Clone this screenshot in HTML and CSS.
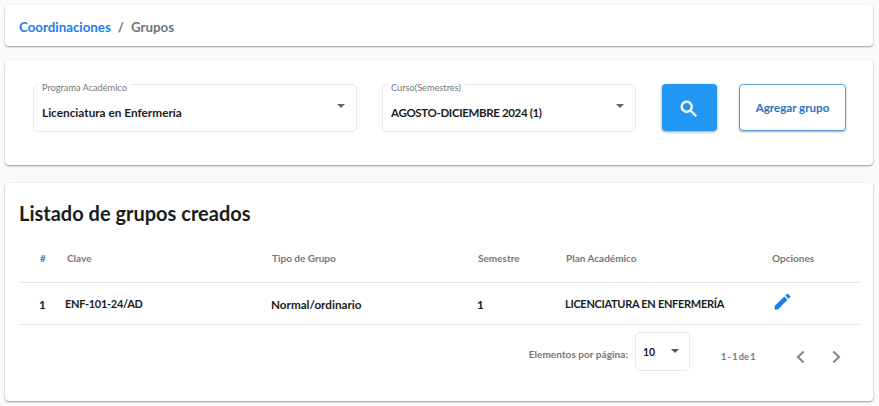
FILE: index.html
```html
<!DOCTYPE html>
<html lang="es">
<head>
<meta charset="utf-8">
<title>Grupos</title>
<link rel="stylesheet" href="styles.css">
</head>
<body>
<main class="page">
  <nav class="card crumbs"><a class="crumb-link">Coordinaciones</a><span class="crumb-sep">/</span><span class="crumb-current">Grupos</span></nav>
  <section class="card filters">
    <div class="select select-program">
      <span class="select-label">Programa Académico</span>
      <span class="select-value">Licenciatura en Enfermería</span>
      <span class="caret"></span>
    </div>
    <div class="select select-course">
      <span class="select-label">Curso(Semestres)</span>
      <span class="select-value select-value-upper">AGOSTO-DICIEMBRE 2024 (1)</span>
      <span class="caret"></span>
    </div>
    <button class="btn-search" aria-label="Buscar">
      <svg width="22" height="22" viewBox="0 0 24 24"><path fill="#fff" stroke="#fff" stroke-width=".6" d="M15.5 14h-.79l-.28-.27A6.47 6.47 0 0 0 16 9.5 6.5 6.5 0 1 0 9.5 16c1.61 0 3.09-.59 4.23-1.57l.27.28v.79l5 4.99L20.49 19l-4.99-5zm-6 0C7.01 14 5 11.99 5 9.5S7.01 5 9.5 5 14 7.01 14 9.5 11.99 14 9.5 14z"/></svg>
    </button>
    <button class="btn-add">Agregar grupo</button>
  </section>
  <section class="card list">
    <h1 class="list-title">Listado de grupos creados</h1>
    <div class="row row-head">
      <span class="c-num">#</span><span class="c-head">Clave</span><span class="c-head-tight">Tipo de Grupo</span><span class="c-head-tight">Semestre</span><span class="c-head-tight">Plan Académico</span><span class="c-head-tight">Opciones</span>
    </div>
    <div class="row row-body">
      <span class="c-num c-num-body">1</span><span class="c-upper">ENF-101-24/AD</span><span>Normal/ordinario</span><span>1</span><span class="c-upper">LICENCIATURA EN ENFERMERÍA</span>
      <span class="c-edit"><svg width="21" height="21" viewBox="0 0 24 24"><path fill="#1a7fe8" d="M3 17.25V21h3.75L17.81 9.94l-3.75-3.75L3 17.25zM20.71 7.04a1 1 0 0 0 0-1.41l-2.34-2.34a1 1 0 0 0-1.41 0l-1.83 1.83 3.75 3.75 1.83-1.83z"/></svg></span>
    </div>
    <div class="paginator">
      <span class="pg-label">Elementos por página:</span>
      <div class="pg-select"><span>10</span><span class="caret caret-pg"></span></div>
      <span class="pg-range">1 - 1 de 1</span>
      <svg class="pg-arrow" width="24" height="24" viewBox="0 0 24 24"><path fill="none" stroke="#8a8585" stroke-width="2" d="M14.6 6.5 9 12l5.6 5.5"/></svg>
      <svg class="pg-arrow" width="24" height="24" viewBox="0 0 24 24"><path fill="none" stroke="#8a8585" stroke-width="2" d="M9.4 6.5 15 12l-5.6 5.5"/></svg>
    </div>
  </section>
</main>
</body>
</html>
```
FILE: styles.css
```css
* { box-sizing: border-box; }
html, body { margin: 0; height: 100%; }
body {
  background: #fafafa;
  font-family: "Lato", "Noto Sans", sans-serif;
  color: #1c1c1c;
  overflow: hidden;
}
.page { display: flex; flex-direction: column; padding: 5px 6px 0 5px; }
.card {
  background: #fff;
  border-radius: 4px;
  box-shadow: 0 1px 2px rgba(0,0,0,.38), 0 0 2px rgba(0,0,0,.06);
}
.crumbs {
  height: 41px;
  display: flex;
  align-items: center;
  padding: 2px 14px 0;
  font-size: 13.3px;
  font-weight: 700;
}
.crumb-link { color: #1a7cf2; }
.crumb-sep { color: #6c757d; margin: 0 7px; }
.crumb-current { color: #6c757d; }
.filters {
  margin-top: 14px;
  height: 105px;
  display: flex;
  align-items: flex-start;
  padding: 24px 27px 0 28px;
}
.select {
  position: relative;
  height: 48px;
  border: 1px solid #e9e9e9;
  border-radius: 5px;
  display: flex;
  align-items: center;
  padding: 8px 8px 0;
}
.select-program { width: 324px; }
.select-course { width: 254px; margin-left: 25px; }
.select-label {
  position: absolute;
  left: 4px;
  top: -3px;
  background: #fff;
  padding: 0 4px;
  font-size: 9.2px;
  line-height: 12px;
  color: #777;
}
.select-value { font-size: 11.8px; font-weight: 700; white-space: nowrap; }
.select-value-upper { font-size: 11.5px; letter-spacing: -.35px; }
.caret {
  position: absolute;
  right: 11px;
  top: 19px;
  width: 0;
  height: 0;
  border-left: 4.5px solid transparent;
  border-right: 4.5px solid transparent;
  border-top: 4.5px solid #666;
}
.btn-search {
  margin-left: 26px;
  width: 55px;
  height: 47px;
  border: 0;
  border-radius: 4px;
  background: #2196f3;
  display: flex;
  align-items: center;
  justify-content: center;
  padding: 2px 1px 0 0;
  box-shadow: 0 1px 3px rgba(0,0,0,.4);
}
.btn-add {
  margin-left: 22px;
  width: 107px;
  height: 47px;
  border: 1px solid #5b9fdc;
  border-radius: 4px;
  background: #fff;
  color: #1f74c4;
  font-family: inherit;
  font-size: 11.6px;
  font-weight: 700;
  padding: 0;
  box-shadow: 0 1px 2px rgba(0,0,0,.35);
}
.list {
  margin-top: 18px;
  height: 218px;
  padding: 0 13px 0 14px;
}
.list-title {
  margin: 0;
  padding-top: 17px;
  height: 57px;
  font-size: 20px;
  line-height: 27px;
  font-weight: 700;
  color: #1c1c1c;
}
.row {
  display: grid;
  grid-template-columns: 46px 206px 206px 88px 206px 89px;
  align-items: center;
  border-bottom: 1px solid #e9e9e9;
}
.row-head { height: 43px; padding-bottom: 6px; font-size: 10px; font-weight: 700; color: #777; }
.row-body { height: 42px; font-size: 11.7px; font-weight: 700; color: #1c1c1c; }
.c-num { padding-left: 21px; }
.c-num-body { padding-left: 20px; }
.c-head { padding-left: 2px; }
.c-head-tight { padding-left: 1px; }
.c-upper { font-size: 11px; letter-spacing: -.3px; }
.c-edit { display: flex; align-items: center; position: relative; top: -2px; padding-left: 1px; }
.paginator {
  display: flex;
  align-items: flex-start;
  justify-content: flex-end;
  padding-top: 7px;
  padding-right: 12px;
  color: #777;
}
.pg-label { font-size: 10.1px; font-weight: 700; margin-right: 7px; margin-top: 16px; }
.pg-select {
  position: relative;
  width: 55px;
  height: 39px;
  border: 1px solid #e9e9e9;
  border-radius: 5px;
  display: flex;
  align-items: center;
  padding-left: 7px;
  font-size: 10.5px;
  font-weight: 700;
  color: #1c1c1c;
}
.caret-pg { right: 10px; top: 16px; border-top-color: #555; }
.pg-range { font-size: 9.2px; word-spacing: -1px; font-weight: 700; margin-left: 31px; margin-right: 28px; margin-top: 19px; width: 40px; white-space: nowrap; }
.pg-arrow { margin-top: 13px; }
.pg-arrow + .pg-arrow { margin-left: 11px; }
```
